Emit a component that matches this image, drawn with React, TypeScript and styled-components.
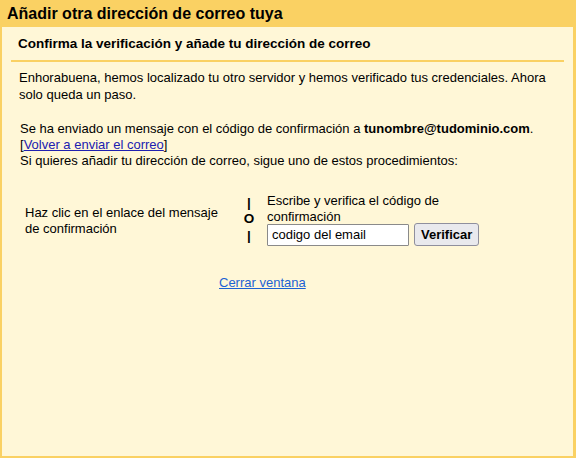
import React from "react";
import styled, { createGlobalStyle } from "styled-components";

const Global = createGlobalStyle`
  html, body { margin: 0; padding: 0; }
  body { font-family: "Liberation Sans", Arial, sans-serif; font-size: 13px; color: #000; }
`;

const Frame = styled.div`
  width: 576px;
  height: 458px;
  box-sizing: border-box;
  background: #fad163;
  display: flex;
  flex-direction: column;
  padding: 0 3px 2px 2px;
`;

const Title = styled.div`
  height: 27px;
  box-sizing: border-box;
  padding: 5px 0 0 5px;
  font-size: 16px;
  font-weight: bold;
  line-height: 18px;
`;

const Panel = styled.div`
  flex: 1;
  background: #fff7d7;
  padding: 0 9px;
`;

const Subtitle = styled.div`
  font-weight: bold;
  font-size: 13.5px;
  line-height: 16px;
  padding: 9px 7px 8px;
  border-bottom: 2px solid #fad163;
`;

const Para = styled.p<{ $indent?: number; $top?: number }>`
  margin: ${(p) => p.$top ?? 0}px 0 0 ${(p) => p.$indent ?? 8}px;
  line-height: ${(p) => (p.$top ? 16 : 17)}px;
  padding-right: 10px;
`;

const Resend = styled.a`
  color: #2020b0;
  text-decoration: underline;
`;

const Options = styled.div`
  display: flex;
  align-items: center;
  margin: 24px 0 0 14px;
`;

const LeftOpt = styled.div`
  width: 219px;
  line-height: 16px;
  padding-top: 2px;
`;

const OrCol = styled.div`
  width: 10px;
  display: flex;
  flex-direction: column;
  align-items: center;
  font-weight: bold;
  font-size: 13.5px;
  line-height: 16.5px;
`;

const RightOpt = styled.div`
  margin-left: 13px;
  width: 220px;
  line-height: 16px;
`;

const Row = styled.div`
  display: flex;
  align-items: center;
  gap: 5px;
  margin-top: -2px;
`;

const CodeInput = styled.input`
  width: 142px;
  height: 22px;
  box-sizing: border-box;
  font-family: "Liberation Sans", Arial, sans-serif;
  font-size: 13px;
  padding: 1px 4px;
  border: 1px solid #8a8a8a;
  background: #fff;
  border-radius: 1px;
  color: #000;
  outline: none;
`;

const Button = styled.button`
  height: 23px;
  box-sizing: border-box;
  font-family: "Liberation Sans", Arial, sans-serif;
  font-size: 13px;
  font-weight: bold;
  padding: 0 6px;
  border: 1px solid #8f8f9d;
  border-radius: 3px;
  background: #e9e9ed;
  color: #000;
`;

const CloseRow = styled.div`
  margin-top: 29px;
  padding-left: 208px;
`;

const CloseLink = styled.a`
  color: #1c62d4;
  text-decoration: underline;
`;

export default function App() {
  return (
    <>
      <Global />
      <Frame>
        <Title>Añadir otra dirección de correo tuya</Title>
        <Panel>
          <Subtitle>Confirma la verificación y añade tu dirección de correo</Subtitle>
          <Para $indent={8} style={{ marginTop: 7 }}>
            Enhorabuena, hemos localizado tu otro servidor y hemos verificado tus credenciales. Ahora solo queda un paso.
          </Para>
          <Para $indent={9} $top={18}>
            Se ha enviado un mensaje con el código de confirmación a <b>tunombre@tudominio.com</b>.
            <br />[<Resend href="#">Volver a enviar el correo</Resend>]
            <br />Si quieres añadir tu dirección de correo, sigue uno de estos procedimientos:
          </Para>
          <Options>
            <LeftOpt>
              Haz clic en el enlace del mensaje
              <br />de confirmación
            </LeftOpt>
            <OrCol>
              <span>|</span>
              <span>O</span>
              <span>|</span>
            </OrCol>
            <RightOpt>
              Escribe y verifica el código de confirmación
              <Row>
                <CodeInput defaultValue="codigo del email" />
                <Button>Verificar</Button>
              </Row>
            </RightOpt>
          </Options>
          <CloseRow>
            <CloseLink href="#">Cerrar ventana</CloseLink>
          </CloseRow>
        </Panel>
      </Frame>
    </>
  );
}
